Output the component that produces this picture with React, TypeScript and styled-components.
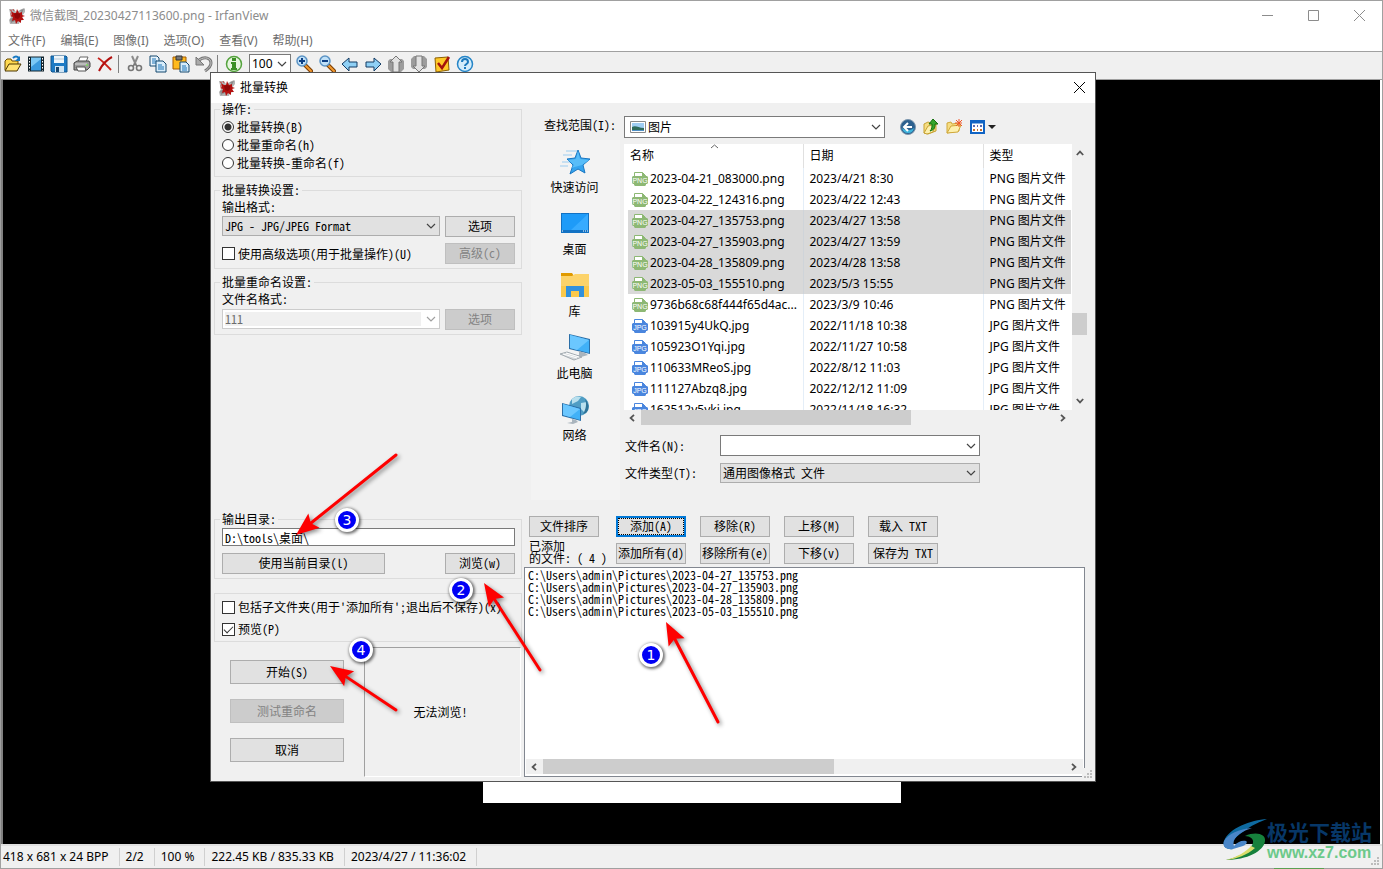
import React from "react";
import styled, { createGlobalStyle, css } from "styled-components";

const uiFont = `"Noto Sans", "Noto Sans CJK SC", sans-serif`;
const dialogFont = `"Noto Sans Mono CJK SC", "Liberation Mono", "Noto Sans CJK SC", monospace`;

const GlobalStyle = createGlobalStyle`
  *, *::before, *::after { box-sizing: border-box; }
  body { margin: 0; background: #000; font: 12px/16px ${uiFont}; color: #000; }
  button, input, select { font: inherit; color: inherit; margin: 0; border-radius: 0; }
  svg { display: block; flex: none; }
`;

/* ---------- main window ---------- */

const Window = styled.div`
  position: relative;
  display: flex;
  flex-direction: column;
  min-height: 100vh;
  min-width: 1100px;
  background: #fff;
  border: 1px solid #a0a0a0;
`;

const TitleBar = styled.header`
  display: flex;
  align-items: center;
  height: 30px;
  padding-left: 8px;
  gap: 5px;
  color: #8c8c8c;
`;

const WindowTitle = styled.h1`
  flex: 1;
  margin: 0;
  font-size: 12px;
  font-weight: 400;
`;

const WindowControls = styled.div`
  display: flex;
`;

const WindowButton = styled.button`
  display: flex;
  align-items: center;
  justify-content: center;
  width: 46px;
  height: 28px;
  padding: 0 0 2px;
  border: 0;
  background: none;
  color: #8c8c8c;
`;

const MenuBar = styled.nav`
  display: flex;
  gap: 15px;
  height: 20px;
  padding-left: 7px;
`;

const MenuItem = styled.button`
  padding: 0;
  border: 0;
  background: none;
  color: #6d6d6d;
  line-height: 20px;
`;

const Toolbar = styled.div`
  display: flex;
  align-items: center;
  height: 29px;
  padding-bottom: 3px;
  background: #f0f0f0;
  border-top: 1px solid #a0a0a0;
  border-bottom: 1px solid #a0a0a0;
`;

const ToolButton = styled.button`
  display: flex;
  align-items: center;
  justify-content: center;
  width: 23px;
  height: 22px;
  padding: 0;
  border: 0;
  background: none;
`;

const ToolSeparator = styled.span`
  width: 1px;
  height: 18px;
  margin: 0 4px 0 2px;
  background: #808080;
`;

const ZoomBox = styled.div`
  margin: 0 1px 0 4px;
`;

const Canvas = styled.main`
  flex: 1;
  display: flex;
  align-items: center;
  justify-content: center;
  min-height: 710px;
  margin-right: 2px;
  background: #000;
  border-left: 2px solid #808080;
`;

const Picture = styled.div`
  width: 418px;
  height: 681px;
  background: #fff;
`;

const StatusBar = styled.footer`
  display: flex;
  height: 24px;
  padding: 2px 0;
  background: #f0f0f0;
  border-top: 2px solid #e0e0e0;
`;

const StatusCell = styled.span`
  padding: 0 10px 0 6px;
  line-height: 18px;
  border-right: 1px solid #d0d0d0;
  &:first-child { padding-left: 2px; }
`;

/* ---------- dialog shell ---------- */

const Dialog = styled.section`
  position: absolute;
  left: 209px;
  top: 71px;
  width: 886px;
  background: #f0f0f0;
  border: 1px solid #555;
  font: 12px/14px ${dialogFont};
`;

const DialogTitle = styled.header`
  display: flex;
  align-items: center;
  height: 30px;
  padding: 0 7px 0 8px;
  gap: 5px;
  background: #fff;
  font: 12px/16px ${uiFont};
`;

const DialogName = styled.h2`
  flex: 1;
  margin: 0;
  font-size: 12px;
  font-weight: 400;
`;

const CloseButton = styled.button`
  padding: 2px 3px 4px;
  border: 0;
  background: none;
`;

const DialogBody = styled.div`
  display: flex;
  gap: 2px;
  padding: 0 8px 4px 3px;
`;

const Settings = styled.div`
  display: flex;
  flex-direction: column;
  width: 308px;
`;

const Files = styled.div`
  flex: 1;
  display: flex;
  flex-direction: column;
  min-width: 0;
`;

const Filler = styled.div`
  flex: 1;
`;

/* ---------- controls ---------- */

const Group = styled.fieldset<{ $gap?: number; $tight?: boolean }>`
  min-width: 0;
  margin: 0 0 ${(p) => p.$gap ?? 8}px;
  padding: ${(p) => (p.$tight ? "2px 6px 1px 7px" : "3px 6px 4px 7px")};
  border: 1px solid #dcdcdc;
`;

const Legend = styled.legend`
  margin-left: -2px;
  padding: 0 2px;
  line-height: 12px;
`;

const Row = styled.div<{ $top?: number }>`
  display: flex;
  align-items: flex-start;
  justify-content: space-between;
  margin-top: ${(p) => p.$top ?? 0}px;
`;

const FieldLabel = styled.label`
  display: block;
  padding-top: 1px;
  line-height: 14px;
`;

const Choice = styled.label<{ $height: number }>`
  display: flex;
  align-items: center;
  gap: 3px;
  height: ${(p) => p.$height}px;
  white-space: nowrap;
`;

const Radio = styled.input.attrs({ type: "radio" })`
  appearance: none;
  width: 12px;
  height: 12px;
  border: 1px solid #333;
  border-radius: 50%;
  background: #fff;
  &:checked { background: radial-gradient(circle, #333 0 3px, #fff 4px); }
`;

const Check = styled.input.attrs({ type: "checkbox" })`
  appearance: none;
  display: grid;
  place-items: center;
  width: 13px;
  height: 13px;
  border: 1px solid #333;
  background: #fff;
  &:checked::after {
    content: "";
    width: 9px;
    height: 5px;
    border: solid #333;
    border-width: 0 0 1px 1px;
    transform: translateY(-1px) rotate(-45deg);
  }
`;

const Button = styled.button<{ $width?: number; $height?: number; $focused?: boolean }>`
  width: ${(p) => p.$width ?? 70}px;
  height: ${(p) => p.$height ?? 21}px;
  padding: 0 0 1px;
  border: 1px solid #adadad;
  background: #e1e1e1;
  line-height: 14px;
  white-space: nowrap;
  ${(p) =>
    p.$focused &&
    css`
      border: 2px solid #0078d7;
      outline: 1px dotted #000;
      outline-offset: -3px;
    `}
  &:disabled {
    border-color: #bfbfbf;
    background: #ccc;
    color: #838383;
  }
`;

const Combo = styled.div<{ $width: number; $height: number; $tone?: "grey" | "off" }>`
  position: relative;
  display: flex;
  align-items: center;
  width: ${(p) => p.$width}px;
  height: ${(p) => p.$height}px;
  border: 1px solid ${(p) => (p.$tone === "grey" ? "#adadad" : p.$tone === "off" ? "#ccc" : "#7a7a7a")};
  background: ${(p) => (p.$tone === "grey" ? "#e1e1e1" : "#fff")};
  > svg.chevron {
    position: absolute;
    right: 3px;
    pointer-events: none;
  }
`;

const ComboSelect = styled.select`
  appearance: none;
  width: 100%;
  height: 100%;
  padding: 0 14px 0 2px;
  border: 0;
  background: none;
  outline: none;
`;

const ComboInput = styled.input`
  width: 100%;
  height: 100%;
  padding: 0 3px;
  border: 0;
  background: none;
  outline: none;
  &:disabled {
    height: 14px;
    margin: 0 18px 0 2px;
    padding: 0;
    background: #f0f0f0;
    color: #6d6d6d;
  }
`;

const PictureSlot = styled.span`
  padding-left: 5px;
`;

const PathInput = styled.input`
  display: block;
  width: 100%;
  height: 18px;
  padding: 0 2px;
  border: 1px solid #7a7a7a;
  background: #fff;
  outline: none;
`;

const BottomArea = styled.div`
  display: flex;
  justify-content: space-between;
  height: 130px;
  padding-right: 1px;
`;

const ActionColumn = styled.div`
  display: flex;
  flex-direction: column;
  gap: 15px;
  padding: 13px 0 0 16px;
`;

const Preview = styled.div`
  display: flex;
  align-items: center;
  justify-content: center;
  width: 157px;
  padding-right: 4px;
  border: 1px solid #fff;
  border-top-color: #a0a0a0;
  border-left-color: #a0a0a0;
`;

/* ---------- file browser ---------- */

const LookInRow = styled.div`
  display: flex;
  align-items: center;
  padding: 13px 0 0 20px;
`;

const LookInLabel = styled.label`
  width: 80px;
  padding-bottom: 4px;
`;

const NavButtons = styled.div`
  display: flex;
  gap: 7px;
  margin-left: 15px;
`;

const NavButton = styled.button`
  display: flex;
  align-items: center;
  padding: 0;
  border: 0;
  background: none;
`;

const Browser = styled.div`
  display: flex;
  gap: 4px;
  padding: 2px 0 0 7px;
`;

const Places = styled.nav`
  display: flex;
  flex-direction: column;
  width: 89px;
  min-height: 360px;
  padding-top: 6px;
  background: #f3f3f3;
`;

const Place = styled.button`
  display: flex;
  flex-direction: column;
  align-items: center;
  gap: 2px;
  height: 62px;
  padding: 0 2px 0 0;
  border: 0;
  background: none;
  font: 12px/16px ${uiFont};
`;

const FilePane = styled.div`
  flex: 1;
  min-width: 0;
  padding-top: 4px;
`;

const ListFrame = styled.div`
  display: flex;
  height: 266px;
`;

const ListView = styled.div`
  flex: 1;
  padding: 0 1px 0 4px;
  overflow: hidden;
  background: #fff;
  font: 12px/16px ${uiFont};
`;

const FileTable = styled.table`
  width: 100%;
  table-layout: fixed;
  border-collapse: collapse;
  th, td {
    height: 21px;
    padding: 0 0 0 6px;
    text-align: left;
    font-weight: 400;
    white-space: nowrap;
    overflow: hidden;
    border-right: 1px solid #e4eef8;
  }
  th { position: relative; height: 24px; border-right-color: #e0e0e0; }
  th:first-child { padding-left: 2px; }
  td:first-child { padding-left: 4px; }
  th:last-child, td:last-child { border-right: 0; }
  th svg { position: absolute; left: 82px; top: 0; }
`;

const FileRow = styled.tr<{ $selected?: boolean }>`
  background: ${(p) => (p.$selected ? "#d9d9d9" : "#fff")};
  td { border-right-color: ${(p) => (p.$selected ? "#cfd4d9" : "#e4eef8")}; }
`;

const FileName = styled.span`
  display: flex;
  align-items: center;
  gap: 2px;
`;

const VScroll = styled.div`
  display: flex;
  flex-direction: column;
  align-items: center;
  width: 15px;
  padding: 5px 0 5px;
`;

const VThumb = styled.div`
  width: 15px;
  height: 22px;
  margin: 156px 0 auto;
  background: #cdcdcd;
`;

const HScroll = styled.div<{ $end?: number }>`
  display: flex;
  align-items: center;
  justify-content: space-between;
  height: 15px;
  padding: 0 5px 0 4px;
  margin-right: ${(p) => p.$end ?? 0}px;
  background: #f0f0f0;
`;

const HThumb = styled.div<{ $width: number }>`
  width: ${(p) => p.$width}px;
  height: 15px;
  margin: 0 auto 0 5px;
  background: #cdcdcd;
`;

const FieldGrid = styled.div`
  display: grid;
  grid-template-columns: 95px 260px;
  row-gap: 7px;
  align-items: center;
  padding: 10px 0 0 1px;
`;

const Commands = styled.div`
  display: grid;
  grid-template-columns: 73px repeat(4, 70px);
  grid-template-rows: 21px 21px;
  gap: 6px 14px;
  padding: 16px 0 3px 5px;
`;

const AddedLabel = styled.span`
  align-self: end;
  line-height: 12px;
  white-space: nowrap;
`;

const AddedBox = styled.div`
  display: flex;
  flex-direction: column;
  justify-content: space-between;
  height: 210px;
  margin-right: 2px;
  padding: 1px 1px 2px;
  background: #fff;
  border: 1px solid #828790;
`;

const AddedList = styled.ul`
  margin: 0;
  padding: 0 2px;
  list-style: none;
  line-height: 12px;
`;

const SizeGrip = styled.svg`
  position: absolute;
  right: 0;
  bottom: 0;
  background: #f0f0f0;
`;

/* ---------- annotations and watermark ---------- */

const Arrows = styled.svg`
  position: absolute;
  left: 0;
  top: 0;
  pointer-events: none;
  filter: drop-shadow(2px 2px 2px rgba(0, 0, 0, 0.45));
`;

const Marker = styled.span<{ $x: number; $y: number }>`
  position: absolute;
  left: ${(p) => p.$x}px;
  top: ${(p) => p.$y}px;
  width: 24px;
  height: 24px;
  border: 3px solid #fff;
  border-radius: 50%;
  background: #0000f5;
  color: #fff;
  font: 14px/18px "DejaVu Sans", sans-serif;
  text-align: center;
  box-shadow: 1px 1px 3px 1px rgba(0, 0, 0, 0.55);
`;

const Watermark = styled.div`
  position: absolute;
  right: 10px;
  bottom: 5px;
  display: flex;
  &::after {
    content: "";
    position: absolute;
    left: 51px;
    bottom: -6px;
    width: 50px;
    height: 1px;
    background: #5ba052;
  }
`;

const WatermarkText = styled.div`
  display: flex;
  flex-direction: column;
  margin-left: -2px;
`;

const SiteName = styled.span`
  color: #073767;
  font: 700 21px/24px "Noto Sans CJK SC", sans-serif;
`;

const SiteUrl = styled.span`
  color: #6cc98a;
  font: 700 16px/20px "Liberation Sans", sans-serif;
`;

/* ---------- drawings ---------- */

const Chevron = ({ color = "#444" }: { color?: string }) => (
  <svg className="chevron" width="10" height="10" viewBox="0 0 10 10">
    <path d="M1 3l4 4 4-4" fill="none" stroke={color} strokeWidth="1.2" />
  </svg>
);

const ScrollArrow = ({ turn = 0 }: { turn?: number }) => (
  <svg width="8" height="8" viewBox="0 0 8 8">
    <path d="M6 0.8L2.6 4 6 7.2" fill="none" stroke="#555" strokeWidth="1.8" transform={`rotate(${turn} 4 4)`} />
  </svg>
);

const AppIcon = () => (
  <svg width="16" height="16" viewBox="0 0 16 16">
    <path d="M0 1h5l2 3 4-2 4-2 1 1v3l-3 4 1 4-3 1-1 3H1l-1-4 2-3z" fill="#b4b4b4" />
    <path d="M1 11l4-2 1 4-4 2zM11 2l4-1-2 4z" fill="#8c8c8c" />
    <path d="M2 3l3 2 2 0 1-4 2 4 3-1 0 3 3 1-3 1 2 3-3 0 0 3-3-2-2 3-1-4-3 1 1-4-3-1 2-1z" fill="#b3100f" />
    <path d="M5 6l3-1 3 1 0 3-2 2-3-1z" fill="#8f0808" />
    <path d="M1 2l2 1M4 1l1 2M1 6h2" stroke="#c9514f" />
  </svg>
);

const toolIcons: Record<string, React.ReactNode> = {
  open: (
    <>
      <path d="M1 15V6l2-2h4l1 2h6v3" fill="#ffd94f" stroke="#6b4a00" />
      <path d="M1 16l4-7h12l-4 7z" fill="#ffe272" stroke="#4d3600" />
      <path d="M9 3c2-2 4-2 6 0" fill="none" stroke="#1778c2" strokeWidth="2" />
      <path d="M16 1v5h-5z" fill="#1778c2" />
    </>
  ),
  slides: (
    <>
      <path d="M1 2h16v14H1z" fill="#13242e" />
      <path d="M4 2h10v14H4z" fill="#7cc8f5" />
      <path d="M4 12l10-8v12H4z" fill="#3b9ade" />
      <path d="M2.5 3v13M15.5 3v13" stroke="#fff" strokeDasharray="1.5 1.5" />
      <path d="M1 2h16M1 16h16" stroke="#13242e" />
    </>
  ),
  save: (
    <>
      <path d="M1 1h15l1 1v15H2l-1-1z" fill="#1d7ac4" stroke="#12568e" />
      <path d="M4 1h10v7H4z" fill="#eef5fa" />
      <path d="M4 4h10" stroke="#b7cad8" />
      <path d="M5 11h9v6H5z" fill="#cfe4f3" />
      <path d="M6 12h3v5H6z" fill="#17466e" />
    </>
  ),
  print: (
    <>
      <path d="M5 7l2-5h8l-2 5z" fill="#fff" stroke="#666" />
      <path d="M1 8l3-2h12l1 2v4l-3 3H1z" fill="#9b9b9b" stroke="#444" />
      <path d="M2 9h12" stroke="#ddd" />
      <path d="M3 12h9l1 4H5z" fill="#fff" stroke="#555" />
      <path d="M13 10h2" stroke="#6f3" />
    </>
  ),
  remove: (
    <>
      <path d="M2 3c5 3 9 8 13 12" fill="none" stroke="#c9211a" strokeWidth="2" />
      <path d="M16 2C10 5 6 10 3 16" fill="none" stroke="#b3100f" strokeWidth="2" />
    </>
  ),
  cut: (
    <>
      <path d="M6 1l4 9M12 1L8 10" stroke="#8b8b8b" strokeWidth="2" />
      <circle cx="5" cy="13" r="2.5" fill="none" stroke="#777" strokeWidth="1.6" />
      <circle cx="13" cy="13" r="2.5" fill="none" stroke="#777" strokeWidth="1.6" />
      <path d="M7 11l2-2 2 2" fill="none" stroke="#777" strokeWidth="1.5" />
    </>
  ),
  copy: (
    <>
      <path d="M1 1h7l2 2v8H1z" fill="#e8f3fb" stroke="#14486f" />
      <path d="M3 4h4M3 6h5M3 8h5" stroke="#1c75b8" />
      <path d="M7 6h7l3 3v8H7z" fill="#d7ecfa" stroke="#14486f" />
      <path d="M9 10h4M9 12h6M9 14h6" stroke="#1c75b8" />
    </>
  ),
  paste: (
    <>
      <path d="M1 2h13v12H1z" fill="#ffb91d" stroke="#a45b00" />
      <path d="M4 1h6v4H4z" fill="#777" stroke="#333" />
      <path d="M8 7h6l3 3v7H8z" fill="#d7ecfa" stroke="#14486f" />
      <path d="M10 11h4M10 13h5M10 15h5" stroke="#1c75b8" />
    </>
  ),
  undo: (
    <>
      <path d="M4 5c6-4 12-2 12 3 0 3-3 6-6 8" fill="none" stroke="#777" strokeWidth="3" />
      <path d="M4 5c6-4 12-2 12 3 0 3-3 6-6 8" fill="none" stroke="#c4c4c4" />
      <path d="M1 2v8h8z" fill="#aaa" stroke="#777" />
    </>
  ),
  info: (
    <>
      <circle cx="9" cy="9" r="7.5" fill="#e6f5df" stroke="#54a33d" strokeWidth="1.5" />
      <path d="M7 3h4v3H7zM6 7h5v6h1v2H6v-2h1V9H6z" fill="#3a8f24" />
    </>
  ),
  zoomIn: (
    <>
      <path d="M10 10l6 6" stroke="#7a3b00" strokeWidth="4" strokeLinecap="round" />
      <path d="M11 11l5 5" stroke="#f29a2e" strokeWidth="2" strokeLinecap="round" />
      <circle cx="7" cy="6" r="5" fill="#bfe0f8" stroke="#5b93c4" strokeWidth="1.5" />
      <path d="M4 6h6M7 3v6" stroke="#0c3f85" strokeWidth="2" />
    </>
  ),
  zoomOut: (
    <>
      <path d="M10 10l6 6" stroke="#7a3b00" strokeWidth="4" strokeLinecap="round" />
      <path d="M11 11l5 5" stroke="#f29a2e" strokeWidth="2" strokeLinecap="round" />
      <circle cx="7" cy="6" r="5" fill="#bfe0f8" stroke="#5b93c4" strokeWidth="1.5" />
      <path d="M4 6h6" stroke="#0c3f85" strokeWidth="2" />
    </>
  ),
  previous: <path d="M1 9l7-6v4h8v5H8v4z" fill="#8fd0f5" stroke="#123a63" strokeLinejoin="round" />,
  next: <path d="M17 9l-7-6v4H2v5h8v4z" fill="#8fd0f5" stroke="#123a63" strokeLinejoin="round" />,
  pageUp: (
    <>
      <path d="M1 6l2-2h12l2 2v8l-3 3H4l-3-3z" fill="#9c9c9c" />
      <path d="M9 1l6 6h-3v10H6V7H3z" fill="#e2e2e2" stroke="#777" strokeLinejoin="round" />
    </>
  ),
  pageDown: (
    <>
      <path d="M1 4l3-3h10l3 3v8l-2 2H3l-2-2z" fill="#9c9c9c" />
      <path d="M9 17l6-6h-3V1H6v10H3z" fill="#e2e2e2" stroke="#777" strokeLinejoin="round" />
    </>
  ),
  options: (
    <>
      <path d="M2 3l13-1 1 13-13 2z" fill="#ffc928" stroke="#8c5f00" />
      <path d="M5 8l4 5 7-11" fill="none" stroke="#a5130c" strokeWidth="2.5" />
    </>
  ),
  help: (
    <>
      <circle cx="9" cy="9" r="7.5" fill="#d4edfb" stroke="#2585c7" strokeWidth="1.5" />
      <path d="M6 7c0-4 6-4 6 0 0 2-3 2-3 4" fill="none" stroke="#1b79bd" strokeWidth="2" />
      <path d="M8 12h2v2H8z" fill="#1b79bd" />
    </>
  ),
};

const Tool = ({ icon, label }: { icon: string; label: string }) => (
  <ToolButton aria-label={label}>
    <svg width="18" height="18" viewBox="0 0 18 18">
      {toolIcons[icon]}
    </svg>
  </ToolButton>
);

const FileIcon = ({ kind }: { kind: "PNG" | "JPG" }) => {
  const color = kind === "PNG" ? "#8db874" : "#4a86de";
  return (
    <svg width="16" height="16" viewBox="0 0 16 16">
      <path d="M2.5 6V1.5h8l3 3V6" fill="#fff" stroke={color} />
      <path d="M10 1v4h4z" fill={color} />
      <path d="M1 5h14l1 1v6l-1 1H1l-1-1V6z" fill={color} />
      <path d="M2 13h12v1l-1 1H3l-1-1z" fill={color} />
      <text x="8" y="12" textAnchor="middle" fontFamily="Liberation Sans" fontSize="7" fill="#fff">
        {kind}
      </text>
    </svg>
  );
};

const placeIcons: Record<string, React.ReactNode> = {
  star: (
    <>
      <path d="M7 5h11M4 9h9M1 20h8M3 16h8" stroke="#9dcdf0" />
      <path d="M19 4l3 8 9 1-7 6 2 8-7-4-8 5 3-9-6-6 8-1z" fill="#35a4ee" stroke="#1a77c2" />
      <path d="M19 5l2 8 9 1-7 5-11 3 3-3-6-5 8-1z" fill="#58bdf8" />
    </>
  ),
  desktop: (
    <>
      <path d="M2 5h28v20H2z" fill="#1272c4" />
      <path d="M3 6h26v16H3z" fill="#1e9bf8" />
      <path d="M12 22L29 6v16z" fill="#37abff" />
      <path d="M3 23h1M24 23h1M26 23h1M28 23h1" stroke="#fff" />
    </>
  ),
  library: (
    <>
      <path d="M2 3h11l2 3h-13z" fill="#e09a00" />
      <path d="M2 6h11l3-2h14v23H2z" fill="#fcd36a" />
      <path d="M2 16h28v11H2z" fill="#fbc94b" />
      <path d="M7 27V16h18v11h-5v-6h-8v6z" fill="#3291dc" />
    </>
  ),
  computer: (
    <>
      <path d="M10 2l21 5v15L10 17z" fill="#2b6fa8" />
      <path d="M11 3l19 5v13L11 16z" fill="#41b1f8" />
      <path d="M11 3l19 5-12 10-7-2z" fill="#6bc7ff" />
      <path d="M20 19v4l-4 1 6 1 7-2-3-2" fill="#a9b4bd" />
      <path d="M1 22l7-2 15 5-8 3z" fill="#d4d8db" stroke="#a3abb1" />
      <path d="M4 22l14 4M7 21l13 4" stroke="#fff" />
    </>
  ),
  network: (
    <>
      <circle cx="20" cy="12" r="10" fill="#4f9dc4" />
      <path d="M13 5c3-3 7-3 9-2l-3 4-6 3zM22 9l6-1c2 4 1 8-2 11l-4-4z" fill="#b9e0ee" />
      <path d="M26 5c4 4 5 10 1 14l-3 1c3-5 4-10 2-15z" fill="#2e7398" />
      <path d="M3 9l19 5v13L3 22z" fill="#2b6fa8" />
      <path d="M4 10l17 5v11L4 21z" fill="#41b1f8" />
      <path d="M4 10l17 5-10 8-7-2z" fill="#6bc7ff" />
      <path d="M13 25v3l-5 1 6 1 5-2-2-2" fill="#a9b4bd" />
    </>
  ),
};

const PictureIcon = () => (
  <svg width="16" height="12" viewBox="0 0 16 12">
    <path d="M0.5 0.5h15v11h-15z" fill="#fff" stroke="#8a8a8a" />
    <path d="M2 2h12v8H2z" fill="#9fcdf2" />
    <path d="M2 6c4-2 6 1 12 1v3H2z" fill="#2f6b5a" />
    <path d="M2 9h12v1H2z" fill="#4f8fc4" />
  </svg>
);

/* Arrow from its tail to its tip, head drawn pointing along +x at the tip. */
const Arrow = ({ from, to }: { from: [number, number]; to: [number, number] }) => {
  const angle = (Math.atan2(to[1] - from[1], to[0] - from[0]) * 180) / Math.PI;
  const length = Math.hypot(to[0] - from[0], to[1] - from[1]);
  return (
    <g transform={`translate(${to[0]} ${to[1]}) rotate(${angle})`} fill="#fe0000">
      <path d={`M${-length} 0L-16 0`} stroke="#fe0000" strokeWidth="3" strokeLinecap="round" />
      <path d="M0 0L-23 9L-19 0L-23-9z" />
    </g>
  );
};

const Grip = () => (
  <SizeGrip width="13" height="13" viewBox="0 0 13 13">
    <path d="M8 2h2v2H8zM8 5h2v2H8zM8 8h2v2H8zM5 5h2v2H5zM5 8h2v2H5zM2 8h2v2H2z" fill="#bcbcbc" />
  </SizeGrip>
);

/* ---------- data ---------- */

const menus = ["文件(F)", "编辑(E)", "图像(I)", "选项(O)", "查看(V)", "帮助(H)"];

const status = ["418 x 681 x 24 BPP", "2/2", "100 %", "222.45 KB / 835.33 KB", "2023/4/27 / 11:36:02"];

const places = [
  ["star", "快速访问"],
  ["desktop", "桌面"],
  ["library", "库"],
  ["computer", "此电脑"],
  ["network", "网络"],
];

type FileEntry = { name: string; date: string; kind: "PNG" | "JPG"; selected?: boolean };

const files: FileEntry[] = [
  { name: "2023-04-21_083000.png", date: "2023/4/21 8:30", kind: "PNG" },
  { name: "2023-04-22_124316.png", date: "2023/4/22 12:43", kind: "PNG" },
  { name: "2023-04-27_135753.png", date: "2023/4/27 13:58", kind: "PNG", selected: true },
  { name: "2023-04-27_135903.png", date: "2023/4/27 13:59", kind: "PNG", selected: true },
  { name: "2023-04-28_135809.png", date: "2023/4/28 13:58", kind: "PNG", selected: true },
  { name: "2023-05-03_155510.png", date: "2023/5/3 15:55", kind: "PNG", selected: true },
  { name: "9736b68c68f444f65d4ac...", date: "2023/3/9 10:46", kind: "PNG" },
  { name: "103915y4UkQ.jpg", date: "2022/11/18 10:38", kind: "JPG" },
  { name: "105923O1Yqi.jpg", date: "2022/11/27 10:58", kind: "JPG" },
  { name: "110633MReoS.jpg", date: "2022/8/12 11:03", kind: "JPG" },
  { name: "111127Abzq8.jpg", date: "2022/12/12 11:09", kind: "JPG" },
  { name: "162512y5yki.jpg", date: "2022/11/18 16:32", kind: "JPG" },
];

const added = files.filter((f) => f.selected).map((f) => `C:\\Users\\admin\\Pictures\\${f.name}`);

/* ---------- sections ---------- */

const SettingsColumn = () => (
  <Settings>
    <Group $gap={7}>
      <Legend>操作:</Legend>
      <Choice $height={18}><Radio name="mode" defaultChecked />批量转换(B)</Choice>
      <Choice $height={18}><Radio name="mode" />批量重命名(h)</Choice>
      <Choice $height={18}><Radio name="mode" />批量转换-重命名(f)</Choice>
    </Group>
    <Group $gap={7}>
      <Legend>批量转换设置:</Legend>
      <FieldLabel htmlFor="format">输出格式:</FieldLabel>
      <Row $top={2}>
        <Combo $width={218} $height={20} $tone="grey">
          <ComboSelect id="format"><option>JPG - JPG/JPEG Format</option></ComboSelect>
          <Chevron />
        </Combo>
        <Button>选项</Button>
      </Row>
      <Row $top={6}>
        <Choice $height={21}><Check />使用高级选项(用于批量操作)(U)</Choice>
        <Button disabled>高级(c)</Button>
      </Row>
    </Group>
    <Group>
      <Legend>批量重命名设置:</Legend>
      <FieldLabel htmlFor="pattern">文件名格式:</FieldLabel>
      <Row $top={3}>
        <Combo $width={218} $height={20} $tone="off">
          <ComboInput id="pattern" defaultValue="111" disabled />
          <Chevron color="#a0a0a0" />
        </Combo>
        <Button disabled>选项</Button>
      </Row>
    </Group>
    <Filler />
    <Group $gap={14}>
      <Legend>输出目录:</Legend>
      <PathInput aria-label="输出目录" defaultValue={"D:\\tools\\桌面\\"} />
      <Row $top={7}>
        <Button $width={163}>使用当前目录(l)</Button>
        <Button>浏览(w)</Button>
      </Row>
    </Group>
    <Group $gap={5} $tight>
      <Choice $height={22}><Check />包括子文件夹(用于'添加所有';退出后不保存)(x)</Choice>
      <Choice $height={22}><Check defaultChecked />预览(P)</Choice>
    </Group>
    <BottomArea>
      <ActionColumn>
        <Button $width={114} $height={24}>开始(S)</Button>
        <Button $width={114} $height={24} disabled>测试重命名</Button>
        <Button $width={114} $height={24}>取消</Button>
      </ActionColumn>
      <Preview>无法浏览!</Preview>
    </BottomArea>
  </Settings>
);

const FilesColumn = () => (
  <Files>
    <LookInRow>
      <LookInLabel htmlFor="lookin">查找范围(I):</LookInLabel>
      <Combo $width={261} $height={22}>
        <PictureSlot><PictureIcon /></PictureSlot>
        <ComboSelect id="lookin"><option>图片</option></ComboSelect>
        <Chevron />
      </Combo>
      <NavButtons>
        <NavButton aria-label="后退">
          <svg width="16" height="16" viewBox="0 0 16 16">
            <circle cx="8" cy="8" r="7.5" fill="#2d618f" stroke="#7d97ad" />
            <path d="M2 9c4 3 8 3 12 0-1 4-3 5-6 5s-5-1-6-5z" fill="#3fb4dc" />
            <path d="M8 4L4 8l4 4M4 8h8" fill="none" stroke="#fff" strokeWidth="2" />
          </svg>
        </NavButton>
        <NavButton aria-label="向上一级">
          <svg width="16" height="16" viewBox="0 0 16 16">
            <path d="M1 5l4-2 3 1 5-1v9l-8 3-4-1z" fill="#f6dd83" stroke="#c7a233" />
            <path d="M1 14l4-7 8-2-3 8-6 2z" fill="#fdf0ae" stroke="#c7a233" />
            <path d="M10 0l5 5h-3c0 4-1 6-5 7 2-2 2-4 2-7H6z" fill="#35a52c" stroke="#14700f" />
          </svg>
        </NavButton>
        <NavButton aria-label="新建文件夹">
          <svg width="16" height="16" viewBox="0 0 16 16">
            <path d="M1 14V4l4-1 1 2 7-1v8z" fill="#f6dd83" stroke="#d0a83a" />
            <path d="M1 14l4-7 10-1-3 7z" fill="#fdf0ae" stroke="#d0a83a" />
            <path d="M13 0v8M9 4h7M10 1l6 6M16 1l-6 6" stroke="#f0562a" />
          </svg>
        </NavButton>
        <NavButton aria-label="查看菜单">
          <svg width="27" height="14" viewBox="0 0 27 14">
            <path d="M2 1h13v12H2z" fill="#fff" stroke="#1164c4" strokeWidth="2" />
            <path d="M1 2h15" stroke="#1164c4" strokeWidth="3" />
            <path d="M4 6h2M8 6h1M11 6h2" stroke="#5d6bb0" strokeWidth="2" />
            <path d="M4 10h2M8 10h1M11 10h2" stroke="#c9722c" strokeWidth="2" />
            <path d="M19 5h8l-4 4z" fill="#222" />
          </svg>
        </NavButton>
      </NavButtons>
    </LookInRow>
    <Browser>
      <Places>
        {places.map(([icon, name]) => (
          <Place key={icon}>
            <svg width="32" height="32" viewBox="0 0 32 32">{placeIcons[icon]}</svg>
            {name}
          </Place>
        ))}
      </Places>
      <FilePane>
        <ListFrame>
          <ListView>
            <FileTable>
              <colgroup><col width="175" /><col width="180" /><col /></colgroup>
              <thead>
                <tr>
                  <th>
                    名称
                    <svg width="9" height="5" viewBox="0 0 9 5"><path d="M1 4l3.5-3L8 4" fill="none" stroke="#666" /></svg>
                  </th>
                  <th>日期</th>
                  <th>类型</th>
                </tr>
              </thead>
              <tbody>
                {files.map((f) => (
                  <FileRow key={f.name} $selected={f.selected}>
                    <td><FileName><FileIcon kind={f.kind} />{f.name}</FileName></td>
                    <td>{f.date}</td>
                    <td>{f.kind} 图片文件</td>
                  </FileRow>
                ))}
              </tbody>
            </FileTable>
          </ListView>
          <VScroll>
            <ScrollArrow turn={90} />
            <VThumb />
            <ScrollArrow turn={-90} />
          </VScroll>
        </ListFrame>
        <HScroll $end={15}>
          <ScrollArrow />
          <HThumb $width={270} />
          <ScrollArrow turn={180} />
        </HScroll>
        <FieldGrid>
          <label htmlFor="filename">文件名(N):</label>
          <Combo $width={260} $height={21}>
            <ComboInput id="filename" />
            <Chevron />
          </Combo>
          <label htmlFor="filetype">文件类型(T):</label>
          <Combo $width={260} $height={20} $tone="grey">
            <ComboSelect id="filetype"><option>通用图像格式 文件</option></ComboSelect>
            <Chevron />
          </Combo>
        </FieldGrid>
      </FilePane>
    </Browser>
    <Commands>
      <Button>文件排序</Button>
      <Button $focused>添加(A)</Button>
      <Button>移除(R)</Button>
      <Button>上移(M)</Button>
      <Button>载入 TXT</Button>
      <AddedLabel>已添加<br />的文件: ( 4 )</AddedLabel>
      <Button>添加所有(d)</Button>
      <Button>移除所有(e)</Button>
      <Button>下移(v)</Button>
      <Button>保存为 TXT</Button>
    </Commands>
    <AddedBox>
      <AddedList>{added.map((path) => <li key={path}>{path}</li>)}</AddedList>
      <HScroll>
        <ScrollArrow />
        <HThumb $width={291} />
        <ScrollArrow turn={180} />
      </HScroll>
    </AddedBox>
  </Files>
);

export default function App() {
  return (
    <Window>
      <GlobalStyle />
      <TitleBar>
        <AppIcon />
        <WindowTitle>微信截图_20230427113600.png - IrfanView</WindowTitle>
        <WindowControls>
          <WindowButton aria-label="最小化">
            <svg width="11" height="11" viewBox="0 0 11 11"><path d="M0 5.5h11" stroke="currentColor" /></svg>
          </WindowButton>
          <WindowButton aria-label="最大化">
            <svg width="11" height="11" viewBox="0 0 11 11"><path d="M0.5 0.5h10v10h-10z" fill="none" stroke="currentColor" /></svg>
          </WindowButton>
          <WindowButton aria-label="关闭">
            <svg width="11" height="11" viewBox="0 0 11 11"><path d="M0 0l11 11M11 0L0 11" stroke="currentColor" /></svg>
          </WindowButton>
        </WindowControls>
      </TitleBar>
      <MenuBar>{menus.map((m) => <MenuItem key={m}>{m}</MenuItem>)}</MenuBar>
      <Toolbar>
        <Tool icon="open" label="打开" />
        <Tool icon="slides" label="幻灯片" />
        <Tool icon="save" label="保存" />
        <Tool icon="print" label="打印" />
        <Tool icon="remove" label="删除" />
        <ToolSeparator />
        <Tool icon="cut" label="剪切" />
        <Tool icon="copy" label="复制" />
        <Tool icon="paste" label="粘贴" />
        <Tool icon="undo" label="撤销" />
        <ToolSeparator />
        <Tool icon="info" label="信息" />
        <ZoomBox>
          <Combo $width={42} $height={21}>
            <ComboSelect aria-label="缩放"><option>100</option></ComboSelect>
            <Chevron />
          </Combo>
        </ZoomBox>
        <Tool icon="zoomIn" label="放大" />
        <Tool icon="zoomOut" label="缩小" />
        <Tool icon="previous" label="上一个" />
        <Tool icon="next" label="下一个" />
        <Tool icon="pageUp" label="上一页" />
        <Tool icon="pageDown" label="下一页" />
        <Tool icon="options" label="选项" />
        <Tool icon="help" label="帮助" />
      </Toolbar>
      <Canvas><Picture /></Canvas>
      <StatusBar>{status.map((s) => <StatusCell key={s}>{s}</StatusCell>)}</StatusBar>
      <Grip />
      <Dialog role="dialog" aria-label="批量转换">
        <DialogTitle>
          <AppIcon />
          <DialogName>批量转换</DialogName>
          <CloseButton aria-label="关闭">
            <svg width="11" height="11" viewBox="0 0 11 11"><path d="M0 0l11 11M11 0L0 11" stroke="#000" /></svg>
          </CloseButton>
        </DialogTitle>
        <DialogBody>
          <SettingsColumn />
          <FilesColumn />
        </DialogBody>
        <Grip />
        <Arrows width="884" height="708" viewBox="211 73 884 708">
          <Arrow from={[396, 455]} to={[296, 535]} />
          <Arrow from={[540, 670]} to={[484, 583]} />
          <Arrow from={[396, 710]} to={[330, 666]} />
          <Arrow from={[718, 722]} to={[666, 622]} />
        </Arrows>
        <Marker $x={124} $y={435}>3</Marker>
        <Marker $x={238} $y={505}>2</Marker>
        <Marker $x={138} $y={565}>4</Marker>
        <Marker $x={428} $y={570}>1</Marker>
      </Dialog>
      <Watermark>
        <svg width="46" height="44" viewBox="0 0 46 44">
          <path d="M44 0C28 1 6 9 1 22c-2 6 3 9 9 8-3-5 0-10 7-15C24 9 33 4 44 0z" fill="#0e6aa0" />
          <path d="M1 22c-2 6 3 9 9 8l10-3c3-1 5-4 3-5-4-1-9 1-12 5-3-8 8-15 18-18C16 10 5 15 1 22z" fill="#4a86c8" />
          <path d="M22 17c11-5 21-2 20 5C41 32 24 41 3 41c14-3 25-10 27-17 1-4-3-7-8-7z" fill="#16813c" />
          <path d="M32 29C24 36 14 40 3 41c11-3 20-8 25-14z" fill="#d9dc6a" />
        </svg>
        <WatermarkText>
          <SiteName>极光下载站</SiteName>
          <SiteUrl>www.xz7.com</SiteUrl>
        </WatermarkText>
      </Watermark>
    </Window>
  );
}
